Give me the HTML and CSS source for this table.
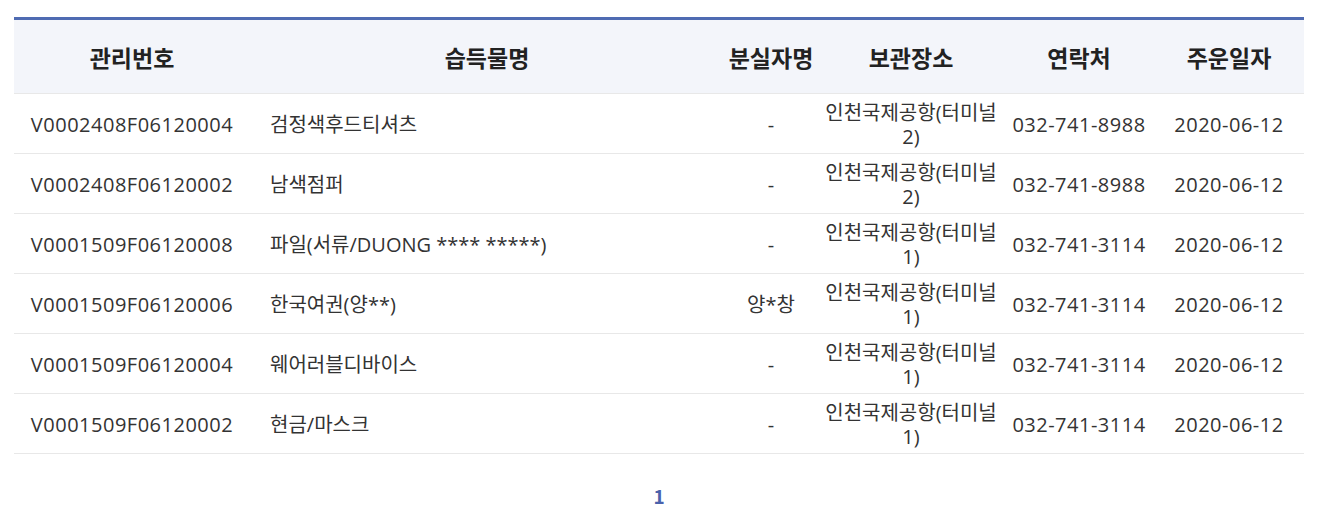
FILE: index.html
```html
<!DOCTYPE html>
<html lang="ko">
<head>
    <meta charset="UTF-8">
    <title>습득물 목록</title>
    <link rel="stylesheet" href="styles.css">
</head>
<body>
    <div class="wrap">
        <table class="list">
            <colgroup>
                <col class="c-no">
                <col class="c-name">
                <col class="c-owner">
                <col class="c-place">
                <col class="c-tel">
                <col class="c-date">
            </colgroup>
            <thead>
                <tr>
                    <th>관리번호</th>
                    <th>습득물명</th>
                    <th>분실자명</th>
                    <th>보관장소</th>
                    <th>연락처</th>
                    <th>주운일자</th>
                </tr>
            </thead>
            <tbody>
                <tr>
                    <td class="num">V0002408F06120004</td>
                    <td class="name">검정색후드티셔츠</td>
                    <td>-</td>
                    <td>인천국제공항(터미널 2)</td>
                    <td class="num">032-741-8988</td>
                    <td class="num">2020-06-12</td>
                </tr>
                <tr>
                    <td class="num">V0002408F06120002</td>
                    <td class="name">남색점퍼</td>
                    <td>-</td>
                    <td>인천국제공항(터미널 2)</td>
                    <td class="num">032-741-8988</td>
                    <td class="num">2020-06-12</td>
                </tr>
                <tr>
                    <td class="num">V0001509F06120008</td>
                    <td class="name">파일(서류/DUONG **** *****)</td>
                    <td>-</td>
                    <td>인천국제공항(터미널 1)</td>
                    <td class="num">032-741-3114</td>
                    <td class="num">2020-06-12</td>
                </tr>
                <tr>
                    <td class="num">V0001509F06120006</td>
                    <td class="name">한국여권(양**)</td>
                    <td>양*창</td>
                    <td>인천국제공항(터미널 1)</td>
                    <td class="num">032-741-3114</td>
                    <td class="num">2020-06-12</td>
                </tr>
                <tr>
                    <td class="num">V0001509F06120004</td>
                    <td class="name">웨어러블디바이스</td>
                    <td>-</td>
                    <td>인천국제공항(터미널 1)</td>
                    <td class="num">032-741-3114</td>
                    <td class="num">2020-06-12</td>
                </tr>
                <tr>
                    <td class="num">V0001509F06120002</td>
                    <td class="name">현금/마스크</td>
                    <td>-</td>
                    <td>인천국제공항(터미널 1)</td>
                    <td class="num">032-741-3114</td>
                    <td class="num">2020-06-12</td>
                </tr>
            </tbody>
        </table>

        <div class="paging">
            <a href="#" class="on">1</a>
        </div>
    </div>
</body>
</html>
```

FILE: styles.css
```css
* { margin: 0; padding: 0; box-sizing: border-box; }

body {
    font-family: "Open Sans", "Noto Sans CJK KR", sans-serif;
    background: #fff;
    color: #333;
}

.wrap {
    width: 1290px;
    margin: 17px 0 0 14px;
}

.list {
    width: 100%;
    table-layout: fixed;
    border-collapse: collapse;
    border-top: 3px solid #4f6bb2;
}

.c-no { width: 236px; }
.c-name { width: 474px; }
.c-owner { width: 94px; }
.c-place { width: 186px; }
.c-tel { width: 150px; }
.c-date { width: 150px; }

.list th {
    height: 75px;
    background: #f3f5fa;
    font-family: "Noto Sans CJK KR", sans-serif;
    font-size: 23px;
    font-weight: 700;
    color: #222;
    border-bottom: 1px solid #e8e8e8;
    text-align: center;
    padding: 0;
}

.list td {
    height: 60px;
    font-size: 20px;
    line-height: 24px;
    text-align: center;
    padding: 2px 5px 0;
    border-bottom: 1px solid #e8e8e8;
    color: #333;
}

.list td.num {
    letter-spacing: 0.5px;
}

.list td.name {
    text-align: left;
    padding-left: 20px;
}

.paging {
    margin-top: 28px;
    text-align: center;
}

.paging a {
    font-family: "Noto Sans CJK KR", sans-serif;
    font-size: 19px;
    font-weight: 700;
    color: #4a62ac;
    text-decoration: none;
}
```
